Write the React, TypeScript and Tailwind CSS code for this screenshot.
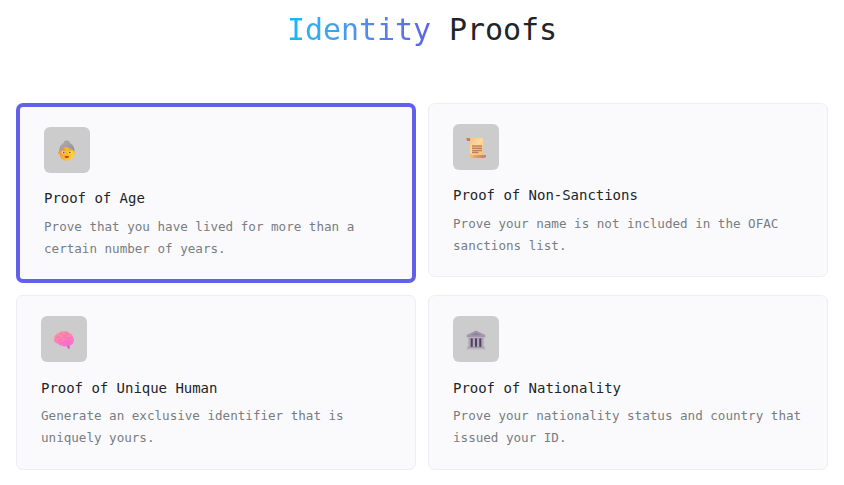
import type { ReactNode } from 'react';

function ElderIcon() {
  return (
    <svg width="20" height="22" viewBox="0 0 20 22">
      <defs>
        <linearGradient id="face" x1="0" y1="0" x2="1" y2="0.3">
          <stop offset="0" stopColor="#f08a3c" />
          <stop offset="0.5" stopColor="#fbb52c" />
          <stop offset="1" stopColor="#ffd21f" />
        </linearGradient>
        <linearGradient id="hair" x1="0" y1="0" x2="1" y2="1">
          <stop offset="0" stopColor="#b0adb1" />
          <stop offset="1" stopColor="#918c92" />
        </linearGradient>
      </defs>
      <ellipse cx="9.800" cy="2.600" rx="2.900" ry="2.200" fill="#a5a1a6" />
      <path d="M9.800 2.600c4.600 0 7.700 3 7.700 8.900H2.100c0-5.900 3.100-8.900 7.700-8.900Z" fill="url(#hair)" />
      <circle cx="2.400" cy="12.800" r="1.300" fill="#f2a13c" />
      <circle cx="17.200" cy="12.800" r="1.300" fill="#fbc02d" />
      <path d="M2.700 11.500C3.200 9.500 6.500 9 8 6.300c2 1.800 7.500 1.700 8.700 5.200.8 5.300-2.300 9.300-7 9.300s-7.600-4-7-9.300Z" fill="url(#face)" />
      <path d="M4.600 10.300q1.500-1.300 3.200-.4M11.700 9.900q1.600-.9 3.200.4" fill="none" stroke="#aa9a8c" strokeWidth="1" />
      <circle cx="6.300" cy="12.300" r="1.500" fill="#f3e8d5" />
      <circle cx="13.200" cy="12.300" r="1.500" fill="#f3e8d5" />
      <circle cx="6.700" cy="12.400" r=".85" fill="#70483b" />
      <circle cx="12.900" cy="12.400" r=".85" fill="#70483b" />
      <path d="M7.200 16.600q2.700-1 5.200 0-2.500 3-5.200 0Z" fill="#cf283f" />
    </svg>
  );
}

function ScrollIcon() {
  return (
    <svg width="20" height="22" viewBox="0 0 20 22">
      <defs>
        <linearGradient id="paper" x1="0" y1="0" x2="1" y2="1">
          <stop offset="0" stopColor="#f2b878" />
          <stop offset="0.5" stopColor="#ffda98" />
          <stop offset="1" stopColor="#f2bd82" />
        </linearGradient>
        <linearGradient id="roll" x1="0" y1="0" x2="1" y2="0">
          <stop offset="0" stopColor="#efb16e" />
          <stop offset="1" stopColor="#c87866" />
        </linearGradient>
      </defs>
      <path d="M.5 1H15.500Q17.200 1 17.200 3v16H4V4H2Q.5 4 .5 3Z" fill="url(#paper)" />
      <path d="M.5 1H3.500Q4.500 2 4 4H1.500Q.3 3.300.5 1Z" fill="#c9776a" />
      <path d="M6.500 18H20Q20.300 21 18 21H5.500Q7 20 6.500 18Z" fill="url(#roll)" />
      <path d="M3.700 17v2.300Q4 21 5.700 21 7 20.500 6.500 18l.2-1Z" fill="#f4bd77" />
      <path d="M6 9h10M6 11.200h10M6 13.400h10M6 15.600h6.500" stroke="#bf8061" strokeWidth="1.500" />
    </svg>
  );
}

function BrainIcon() {
  return (
    <svg width="22" height="20" viewBox="0 0 22 20">
      <defs>
        <linearGradient id="brain" x1="0.2" y1="0" x2="0.6" y2="1">
          <stop offset="0" stopColor="#fb919d" />
          <stop offset="0.5" stopColor="#ff7fb9" />
          <stop offset="1" stopColor="#f866e0" />
        </linearGradient>
      </defs>
      <path d="M1.200 9C.8 5.500 3.500 3.500 5.500 3 7 1.300 9.500 1 11 1.500c2-.6 4.500.1 5.500 1.500 2.300.7 3.300 2.700 3.500 4 1 1.500 1.200 4 .3 5.500-.5 1.800-2 2.700-3.800 2.800l.2 3.200h-2l-1.300-2.500c-2 .8-4 .5-5-.7-1.400.3-2.900-.2-3.200-1.700C2.700 13.500.6 11.800 1.200 9Z" fill="url(#brain)" />
      <path d="M3 8.500q2-3 4-1.200M6.500 4q2-1 3 1t3 0M12 2.500q3 0 3 3M10 8q2-2 4 0t4-.5M5 11q3-.5 4-3M6.500 13q3.500.5 5.500-1.500t6 .5M12 14.500q1.500-2 4-1.500" fill="none" stroke="#ed5b9f" strokeWidth=".8" opacity=".55" />
      <path d="M14.500 15.300h2l.2 3.200h-1.500Z" fill="#ee57b4" />
    </svg>
  );
}

function MuseumIcon() {
  return (
    <svg width="20" height="20" viewBox="0 0 20 20">
      <path d="M3 8h14v9H3Z" fill="#777080" />
      <path d="M10 .5 19.300 5v2H.7V5Z" fill="#a196ae" />
      <path d="M10 2.500 15.300 5.200H4.700Z" fill="#8c8298" />
      <path d="M1.500 7h17v1.500h-17Z" fill="#b9b0c2" />
      <path d="M2.300 8.500h2.500v9H2.300ZM6.600 8.500H9v9H6.600ZM11 8.500h2.400v9H11ZM15.200 8.500h2.500v9h-2.500Z" fill="#b0a7b9" />
      <path d="M4.800 8.500h1.800v9H4.800ZM9 8.500h2v9H9ZM13.400 8.500h1.800v9h-1.800Z" fill="#51405f" />
      <path d="M1.500 16.800h17v1.200h-17Z" fill="#a297ac" />
      <path d="M.3 18h19.400v1.600H.3Z" fill="#beb7c3" />
    </svg>
  );
}

interface ProofCardProps {
  icon: ReactNode;
  title: string;
  description: string;
  selected?: boolean;
}

function ProofCard({ icon, title, description, selected = false }: ProofCardProps) {
  return (
    <article
      className={`rounded-[7px] bg-[#fafafc] px-6 pt-5 pb-[19.6px] ${
        selected ? 'border-4 border-[#6060e8]' : 'border border-[#ededf4]'
      }`}
    >
      <div className="flex size-[46px] items-center justify-center rounded-md bg-[#cccccc] pt-[2px]">
        {icon}
      </div>
      <h2 className="mt-[14.2px] text-[14px] leading-[22px] tracking-[-0.028px] text-[#212529]">{title}</h2>
      <p className="mt-[6.4px] text-[12.6px] leading-[22.1px] tracking-[-0.015px] text-[#787d82]">{description}</p>
    </article>
  );
}

export default function App() {
  return (
    <main className="h-[485px] overflow-hidden bg-white px-4 font-['DejaVu_Sans_Mono',monospace]">
      <h1 className="pt-[10px] text-center text-[30px] leading-[40px] tracking-[-0.06px] text-[#212529]">
        <span className="bg-linear-to-r from-[#00bdf2] to-[#6060e8] bg-clip-text text-transparent">Identity</span> Proofs
      </h1>
      <section className="mt-[53px] grid grid-cols-2 items-start gap-3">
        <ProofCard
          selected
          icon={<ElderIcon />}
          title="Proof of Age"
          description="Prove that you have lived for more than a certain number of years."
        />
        <ProofCard
          icon={<ScrollIcon />}
          title="Proof of Non-Sanctions"
          description="Prove your name is not included in the OFAC sanctions list."
        />
        <ProofCard
          icon={<BrainIcon />}
          title="Proof of Unique Human"
          description="Generate an exclusive identifier that is uniquely yours."
        />
        <ProofCard
          icon={<MuseumIcon />}
          title="Proof of Nationality"
          description="Prove your nationality status and country that issued your ID."
        />
      </section>
    </main>
  );
}
